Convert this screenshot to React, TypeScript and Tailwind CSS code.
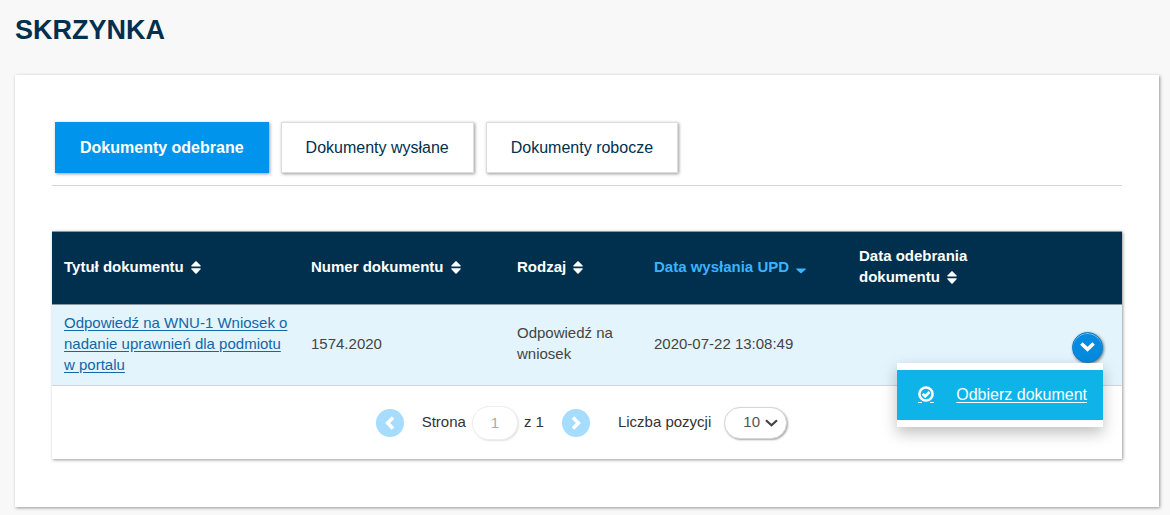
import { useState } from 'react';

const tabs = ['Dokumenty odebrane', 'Dokumenty wysłane', 'Dokumenty robocze'];

const columns = [
  { label: 'Tytuł dokumentu', width: 'w-[247px]' },
  { label: 'Numer dokumentu', width: 'w-[206px]' },
  { label: 'Rodzaj', width: 'w-[137px]' },
  { label: 'Data wysłania UPD', width: 'w-[205px]', sorted: true },
  { label: 'Data odebrania dokumentu', width: 'w-[140px]' },
];

const documents = [
  {
    title: 'Odpowiedź na WNU-1 Wniosek o nadanie uprawnień dla podmiotu w portalu',
    number: '1574.2020',
    kind: 'Odpowiedź na wniosek',
    sent: '2020-07-22 13:08:49',
    received: '',
  },
];

function SortIcon({ sorted }: { sorted?: boolean }) {
  return (
    <svg width="10" height="13" viewBox="0 0 10 13" fill="currentColor" className="ml-[7px] inline-block align-[-2px]" aria-hidden="true">
      {!sorted && <path d="M4.4.4.4 4.6C0 5.1.2 5.6.8 5.6h8.4c.6 0 .8-.5.4-1L5.6.4a.8.8 0 0 0-1.2 0z" />}
      {sorted ? (
        <path d="m4.4 12 -4-3.6C0 8 .2 7.6.8 7.6h8.4c.6 0 .8.4.4.8l-4 3.6a.9.9 0 0 1-1.2 0z" />
      ) : (
        <path d="m4.4 12.4-4-4.2C0 7.7.2 7.2.8 7.2h8.4c.6 0 .8.5.4 1l-4 4.2a.8.8 0 0 1-1.2 0z" />
      )}
    </svg>
  );
}

function ReceiveIcon() {
  return (
    <svg width="16" height="17" viewBox="0 0 16 17" fill="none" stroke="currentColor" aria-hidden="true">
      <circle cx="8" cy="8" r="6.6" strokeWidth="2.5" />
      <path d="m4.6 7.8 2.6 2.5 4.3-4.3" strokeWidth="2.7" />
      <path d="M0 16.5h4M12 16.5h4" strokeWidth="1" />
    </svg>
  );
}

function RowMenu() {
  const [open, setOpen] = useState(true);

  return (
    <div className="relative mr-[19px] flex justify-end">
      <button
        type="button"
        aria-label="Akcje"
        aria-expanded={open}
        onClick={() => setOpen(!open)}
        className="flex size-[31px] items-center justify-center rounded-full border border-[#0a80cc] bg-[#048bdf] text-white shadow-[inset_0_1px_0_0_#7cc4f0,1px_1px_3px_rgba(0,0,0,0.5)]"
      >
        <svg width="15" height="10" viewBox="0 0 15 10" fill="none" stroke="currentColor" strokeWidth="3.6" aria-hidden="true">
          <path d="m1.4 1.5 6.1 5.8 6.1-5.8" />
        </svg>
      </button>
      {open && (
        <div className="absolute top-full right-0 z-10 w-[206px] bg-white py-[7px] shadow-[0_6px_14px_rgba(0,0,0,0.25)]">
          <a href="#odbierz" className="flex h-[50px] items-center justify-between bg-[#0eb4e8] px-4 pl-[21px] text-base text-white">
            <ReceiveIcon />
            <span className="underline underline-offset-2">Odbierz dokument</span>
          </a>
        </div>
      )}
    </div>
  );
}

function Pagination() {
  const arrow = 'flex size-7 items-center justify-center rounded-full bg-[#a6dcfd] text-white';

  return (
    <div className="flex h-[73px] items-center justify-center pr-[11px] text-[15px] text-[#333]">
      <button type="button" aria-label="Poprzednia strona" className={arrow}>
        <svg width="10" height="14" viewBox="0 0 10 14" fill="none" stroke="currentColor" strokeWidth="3.6" aria-hidden="true">
          <path d="M8 1.4 2.6 7 8 12.6" />
        </svg>
      </button>
      <label htmlFor="page" className="ml-[18px]">Strona</label>
      <input
        id="page"
        defaultValue="1"
        className="ml-1.5 h-[34px] w-[46px] rounded-full border border-[#eee] bg-white text-center text-[#aaa] shadow-[1px_1px_2px_rgba(0,0,0,0.12)]"
      />
      <span className="mr-[18px] ml-1.5">z 1</span>
      <button type="button" aria-label="Następna strona" className={arrow}>
        <svg width="10" height="14" viewBox="0 0 10 14" fill="none" stroke="currentColor" strokeWidth="3.6" aria-hidden="true">
          <path d="M2 1.4 7.4 7 2 12.6" />
        </svg>
      </button>
      <label htmlFor="page-size" className="ml-7">Liczba pozycji</label>
      <div className="relative ml-[13px]">
        <select
          id="page-size"
          defaultValue="10"
          className="h-8 w-[63px] appearance-none rounded-full border border-[#d5d5da] bg-white pl-[18px] text-[#555] shadow-[1px_1px_2px_rgba(0,0,0,0.35)]"
        >
          <option>10</option>
          <option>20</option>
          <option>50</option>
        </select>
        <svg width="13" height="8" viewBox="0 0 13 8" fill="none" stroke="#444" strokeWidth="2.2" className="pointer-events-none absolute top-3 right-[9px]" aria-hidden="true">
          <path d="m1 1.2 5.5 5 5.5-5" />
        </svg>
      </div>
    </div>
  );
}

export default function App() {
  const [activeTab, setActiveTab] = useState(tabs[0]);

  return (
    <div className="min-h-screen bg-[#f8f8f8] pt-3 pr-[11px] pb-2 pl-[15px] font-['Liberation_Sans',Arial,sans-serif]">
      <h1 className="text-[27px] leading-9 font-bold text-[#00304e]">SKRZYNKA</h1>

      <main className="mt-[27px] bg-white px-[37px] pt-[47px] pb-12 shadow-[1px_1px_3px_rgba(0,0,0,0.4)]">
        {/* Tabs */}
        <nav className="flex gap-3 border-b border-[#d5d5d5] pb-3 pl-[3px]">
          {tabs.map((tab) => (
            <button
              key={tab}
              type="button"
              onClick={() => setActiveTab(tab)}
              className={`h-[51px] border px-6 text-base shadow-[1px_1px_3px_rgba(0,0,0,0.4)] ${
                tab === activeTab
                  ? 'border-[#0094ec] bg-[#0094ec] font-bold text-white'
                  : 'border-[#ddd] bg-white text-[#00304e]'
              }`}
            >
              {tab}
            </button>
          ))}
        </nav>

        {/* Documents */}
        <section className="mt-[45px] bg-white shadow-[1px_1px_3px_rgba(0,0,0,0.4)]">
          <table className="w-full table-fixed border-collapse text-left text-[15px] leading-[21px]">
            <thead>
              <tr className="h-[73px] border-y border-[#8c979f] bg-[#00304e] text-white">
                {columns.map(({ label, width, sorted }) => (
                  <th key={label} scope="col" className={`${width} pr-1 pb-1 pl-3 font-bold ${sorted ? 'text-[#3db2ff]' : ''}`}>
                    {label}
                    <SortIcon sorted={sorted} />
                  </th>
                ))}
                <td />
              </tr>
            </thead>
            <tbody>
              {documents.map((doc) => (
                <tr key={doc.number} className="h-[81px] border-b border-[#d0d6da] bg-[#e3f4fc] text-[#444]">
                  <td className="pr-1 pb-1 pl-3">
                    <a href="#dokument" className="text-[#1167a8] underline underline-offset-2">
                      {doc.title}
                    </a>
                  </td>
                  <td className="pr-1 pb-1 pl-3">{doc.number}</td>
                  <td className="pr-1 pb-1 pl-3">{doc.kind}</td>
                  <td className="pr-1 pb-1 pl-3">{doc.sent}</td>
                  <td className="pr-1 pb-1 pl-3">{doc.received}</td>
                  <td className="pt-1">
                    <RowMenu />
                  </td>
                </tr>
              ))}
            </tbody>
          </table>
          <Pagination />
        </section>
      </main>
    </div>
  );
}
